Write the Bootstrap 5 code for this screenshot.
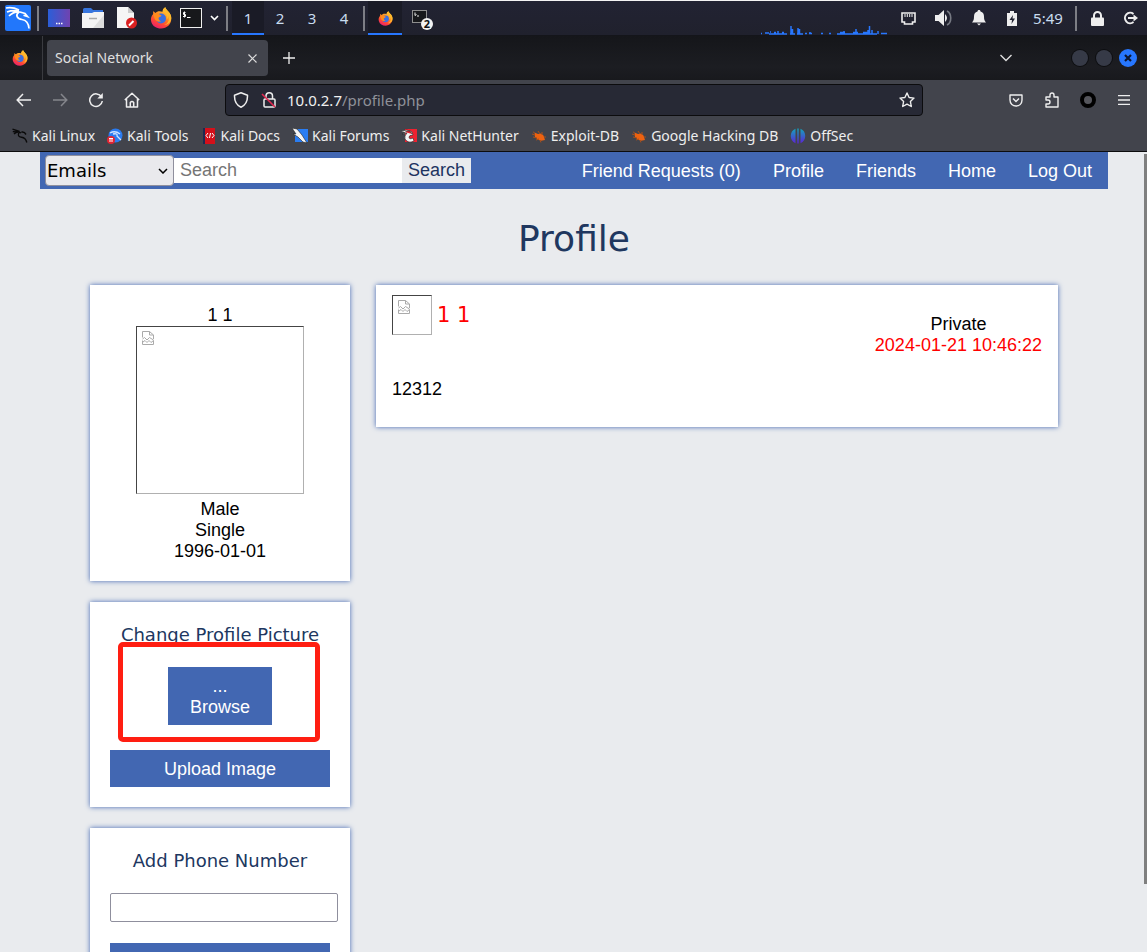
<!DOCTYPE html>
<html lang="en">
<head>
<meta charset="utf-8">
<meta name="viewport" content="width=device-width, initial-scale=1">
<title>Social Network</title>
<link href="https://cdn.jsdelivr.net/npm/bootstrap@5.3.0/dist/css/bootstrap.min.css" rel="stylesheet">
<style>
html, body { height: 100%; }
body { font: 15px/20px "Noto Sans", sans-serif; background: #e9ebee; color: #eee; overflow: hidden; }
svg { display: block; flex: none; }
a { color: inherit; text-decoration: none; }
.plain { background: none; border: 0; padding: 0; color: inherit; display: flex; align-items: center; justify-content: center; flex: none; }
/* desktop panel */
.panel { height: 36px; flex: none; background: linear-gradient(#222333, #20212d); border-top: 1px solid #f4f4f4; border-bottom: 1px solid #14151a; }
.panel .plain { height: 34px; }
.w16 { width: 16px; } .w26 { width: 26px; } .w30 { width: 30px; } .w32 { width: 32px; } .w34 { width: 34px; }
.w36 { width: 36px; } .w38 { width: 38px; } .w40 { width: 40px; } .w42 { width: 42px; } .w46 { width: 46px; }
.divider { width: 10px; display: flex; justify-content: center; flex: none; }
.divider::before { content: ""; width: 2px; height: 25px; background: #7d7e85; }
.divider.slim { width: 4px; } .divider.mid { width: 8px; }
.active-task { background: #1a1b26; box-shadow: inset 0 -2px #2777ff; }
.space { color: #c9dcef; }
/* browser */
.tabstrip { height: 44px; flex: none; background: linear-gradient(#15161a, #1c1d22 70%, #18191d); padding-right: 7px; }
.tabstrip .pin { border-right: 1px solid #3a3b40; height: 44px; width: 43px; padding-right: 2px; }
.tab { width: 221px; height: 36px; background: #42444c; border-radius: 4px; color: #e0e0e0; padding: 0 8px; margin-left: 4px; font-size: 14px; }
.all-tabs { margin-right: 41px; }
.round { width: 16px; height: 16px; border-radius: 50%; background: #363a47; margin: 0 4px; box-shadow: 0 0 0 1px #0d0e11; }
.close-win { background: #2777ff; box-shadow: 0 0 0 1px #2777ff; }
.toolbar { height: 40px; flex: none; background: #42444c; padding: 0 5px 0 6px; gap: 75px; }
.urlbar { height: 32px; background: #272935; border: 1px solid #0c0c0e; border-radius: 4px; padding: 0 7px; }
.urlbar .addr { color: #8f9199; } .urlbar b { color: #f0f0f0; font-weight: 400; }
.bookmarks { height: 32px; flex: none; background: #42444c; border-bottom: 1px solid #0c0c0d; padding: 0 12px; gap: 12px; font-size: 14px; }
.bookmarks a { display: flex; align-items: center; gap: 4px; white-space: nowrap; }
/* site */
.viewport { flex: 1 1 0; background: #e9ebee; color: #000; font: 18px/21px "Liberation Sans", sans-serif; min-height: 0; overflow: hidden; }
.thumb { width: 3px; height: 730px; background: #7f7f7f; margin-top: 2px; }
.site { padding: 0 36px 0 40px; min-width: 0; }
.topbar { background: #4267b2; height: 37px; padding: 0 0 0 5px; color: #fff; }
.topbar .links a { padding: 2px 16px 0; }
.kind { width: 129px; height: 31px; flex: none; border: 1px solid #8f8f9d; border-radius: 4px; background: #e9e9ed url("data:image/svg+xml,%3Csvg xmlns='http://www.w3.org/2000/svg' width='10' height='6'%3E%3Cpath d='M1 1l4 4 4-4' fill='none' stroke='%23000' stroke-width='1.5'/%3E%3C/svg%3E") no-repeat right 5px center; appearance: none; font: 18px "DejaVu Sans", sans-serif; padding: 0 1px; color: #000; }
.query { width: 228px; height: 25px; border: 0; padding: 0 6px; font: inherit; border-radius: 0; }
.query::placeholder { color: #757575; opacity: 1; }
.go { height: 25px; border: 0; background: #e9ebee; color: #1d3461; padding: 0 6px; font: inherit; }
h1, h2 { font-family: "DejaVu Sans", sans-serif; font-weight: 400; color: #20375f; text-align: center; margin: 0; }
h1 { font-size: 36px; line-height: 92px; padding-top: 4px; } h2 { font-size: 18px; line-height: 25px; }
.columns { padding: 0 50px; gap: 26px; }
.side { width: 260px; gap: 21px; flex: none; }
.box { background: #fff; box-shadow: 0 0 5px #4267b2; padding: 20px; position: relative; }
.broken { border: 1px solid #b0b0b0; border-top-color: #444; border-left-color: #444; padding: 4px 5px; }
.big { width: 168px; height: 168px; margin: 0 auto 5px; } .tiny { width: 40px; height: 40px; }
.about { padding-bottom: 19px; }
.act { background: #4267b2; color: #fff; border: 0; border-radius: 0; padding: 9px 8px 7px; min-height: 37px; font: inherit; line-height: 21px; display: block; }
.browse { width: 104px; margin: 20px auto 25px; text-align: center; cursor: pointer; }
.mark-box { position: absolute; left: 28px; top: 40px; width: 202px; height: 100px; border: 5px solid #ff1e12; border-radius: 5px; pointer-events: none; }
.phone { width: 228px; height: 29px; border: 1px solid #8f8f9d; border-radius: 2px; margin: 20px 0 21px; display: block; }
.post { padding: 10px 16px 27px; }
.author { font: 21px/40px "DejaVu Sans", sans-serif; color: #f00; margin-left: 5px; }
.stamp { padding-top: 19px; } .stamp time { color: #f00; }
.message { margin: 23px 0 0; }
</style>
</head>
<body class="d-flex flex-column">
<svg width="0" height="0" class="position-absolute" aria-hidden="true">
  <defs>
    <linearGradient id="fxg" x1=".8" y1="0" x2=".3" y2="1"><stop offset="0" stop-color="#ffe14a"/><stop offset=".45" stop-color="#ff8a1f"/><stop offset=".75" stop-color="#ff4438"/><stop offset="1" stop-color="#e8206e"/></linearGradient>
    <linearGradient id="desk" x1="0" x2="1"><stop offset="0" stop-color="#2b5ed8"/><stop offset="1" stop-color="#7043b0"/></linearGradient>
    <linearGradient id="off" x1="0" x2="0" y1="0" y2="1"><stop offset="0" stop-color="#12a5bd"/><stop offset="1" stop-color="#5c22d6"/></linearGradient>
    <symbol id="fox" viewBox="0 0 22 22"><path fill="url(#fxg)" d="M3.400 4C3 5 3 6 3.200 7 1 9 .5 12 1.300 15c1.300 4.200 5 6.500 9.700 6.500 6 0 10.300-4.300 10.300-10 0-3-1.300-5.600-3-7C17.500 3 15.500 2 15.300.3c-2 1.200-2.800 2.700-2.800 4.400-3-1-5.600-.5-7 1.300C4.500 5.400 3.800 4.800 3.400 4z"/><circle cx="11" cy="11.500" r="5" fill="#3b6fe0"/><path fill="#ff8b1d" d="M3.200 7c2-1.500 4.500-1.200 6 .3l2.300 1.200c0 1.300-2.500 1.500-3 2.500 0 1.500 1 2.800 2.700 3.300-2.500 1-6-.1-6.700-3z"/><path fill="#ffb92c" d="M13 4.500c3 1.500 4.300 4 3.800 7.500 1.400-.5 1.700-2 1.600-3.500C20 13 18 17 14 18c6-.3 8-5 7-9-.5-2-2-4-3.500-5.300-.8-1-1.800-2-2.200-3.400-2 1.200-2.500 2.600-2.300 4.200z"/></symbol>
    <symbol id="dragon" viewBox="0 0 16 16"><path d="M.5 1.200 7.500 3.500M.8 3.600 7 4M2 6C4 4 7 3.800 9 5M9.500 3.800l3 .7 1.500 2M7 4.500C5.500 7 6.500 9 9.500 9.300c3 .3 4.500 1.700 5.300 5.200" fill="none" stroke="currentColor" stroke-width="1.400"/></symbol>
    <symbol id="bug" viewBox="0 0 16 16"><path d="M3.500 4.500 7 6l3-.5 2.500 2L14 12l-4 .8-3-1.300-3-2.500z" fill="#ee6210"/><path d="m1 6 3 1M2 9l4 1M5 12l3-1M7 3l2 3M11 4l0 3M9 12l1 2.500M13 9l2 0M3.500 4.500 2 4" stroke="#a8501c" stroke-width="1"/></symbol>
    <symbol id="broken" viewBox="0 0 12 14"><path d="M.5 6.500v-6h7l4 3.500v4M7.500.5v3.500h4M.5 9.500v4h11v-4M.5 8l2-1.500L5 9l2.500-2.500L11.500 9M1 11l2-1.500L5 11.500l2-2 2 2 2.500-2" fill="none" stroke="#aaa"/></symbol>
  </defs>
</svg>

<header class="panel d-flex">
  <button class="plain w36" aria-label="Applications"><svg width="26" height="26" viewBox="0 0 26 26"><rect width="26" height="26" rx="2" fill="#2277fb"/><path d="M1 3c5-1 9 0 13 2M2 7c4-1.500 8-1.500 12-1M4 11c3-3 7-4.500 11-4M15 7l5 1.500 2.500 3-4-1.200M14 7c-4 3-2 7 3 7.500 4 .5 6.500 3 7 9" fill="none" stroke="#fff" stroke-width="1.700"/></svg></button>
  <span class="divider slim align-items-center"></span>
  <button class="plain w38" aria-label="Show desktop"><svg width="22" height="18" viewBox="0 0 22 18"><rect width="22" height="18" fill="url(#desk)"/><path d="M8 14.500h1.500m1 0h1.500m1 0h1.500" stroke="#fff" stroke-width="1.500"/></svg></button>
  <button class="plain w30" aria-label="Files"><svg width="22" height="20" viewBox="0 0 22 20"><path d="M1 6V1.500Q1 0 2.500 0H9l2 2h10v4z" fill="#3775dd"/><path d="M0 5h10l2-1h10v16H0z" fill="#f3f3f3"/><path d="M22 7v13H11z" fill="#ddd"/><path d="M7 10.500h8" stroke="#aaa" stroke-width="1.500"/></svg></button>
  <button class="plain w38" aria-label="Text editor"><svg width="20" height="22" viewBox="0 0 20 22"><path d="M0 0h11l6 6v15H0z" fill="#f5f5f5"/><path d="M11 0v6h6z" fill="#ccc"/><circle cx="14.500" cy="16" r="5.500" fill="#da2020"/><path d="m12 18.500 4.500-4.500" stroke="#fff" stroke-width="2"/></svg></button>
  <button class="plain w30" aria-label="Firefox"><svg width="22" height="22"><use href="#fox"/></svg></button>
  <button class="plain w30" aria-label="Terminal"><svg width="22" height="20" viewBox="0 0 22 20"><rect x=".5" y=".5" width="21" height="19" fill="#17181b" stroke="#f0f0f0"/><path d="M5.500 4.500H3.500v2h2V8.500H3M4.500 3.500V9.500M7 9.500h3.500" fill="none" stroke="#fff"/></svg></button>
  <button class="plain w16" aria-label="More terminals"><svg width="9" height="6" viewBox="0 0 9 6"><path d="m1 1 3.500 3.500L8 1" fill="none" stroke="#fff" stroke-width="1.600"/></svg></button>
  <span class="divider align-items-center"></span>
  <button class="plain space w32 active-task">1</button>
  <button class="plain space w32">2</button>
  <button class="plain space w32">3</button>
  <button class="plain space w32">4</button>
  <span class="divider mid align-items-center"></span>
  <button class="plain w34 active-task" aria-label="Firefox window"><svg width="15" height="15"><use href="#fox"/></svg></button>
  <button class="plain w38" aria-label="Terminal windows"><svg width="24" height="24" viewBox="0 0 24 24"><rect x="3.500" y="4.500" width="14" height="12" fill="#17181b" stroke="#8e8e8e"/><path d="M6 6.500v3l1.500-1M8 10h2" fill="none" stroke="#eee"/><circle cx="18" cy="18" r="6" fill="#f2f2f2"/><text x="18" y="22" font-size="11" font-weight="700" text-anchor="middle" fill="#111">2</text></svg></button>
  <div class="flex-grow-1 d-flex justify-content-end align-items-end"><svg width="127" height="11" viewBox="0 0 127 11"><path d="M1 9.500h1M5 9h4M9 10h18M10 8h1M14 8.500h2M18 7v3M22 8.500h2M31 2v8M32.500 5v5M30 10h5M38 4v6M39.500 5v5M37 10h6M45 9.500h2M49 9.500h3M50 8v2M61 9.500h2M69 9.500h2M77 10h40M80 8.500h5M84 7v3M93 8.500h5M96 5v5M103 8.500h7M108 6v4M109.500 2v8M112 6v4M118 7v3M121 9.500h6" stroke="#2777ff" stroke-width="1.500"/></svg></div>
  <button class="plain w42" aria-label="Network"><svg width="15" height="13" viewBox="0 0 15 13"><path d="M1 1h13v9h-2.500v2h-8v-2H1z" fill="none" stroke="#eee" stroke-width="1.600"/><path d="M4 2v3m2.300-3v3m2.400-3v3M11 2v3" stroke="#eee"/></svg></button>
  <button class="plain w30" aria-label="Volume"><svg width="18" height="16" viewBox="0 0 18 16"><path d="M0 5h3.500L9 0v16l-5.500-5H0z" fill="#eee"/><path d="M10 4q4 4 0 8z" fill="#eee"/><path d="M12 1c5 2.500 5 11.500 0 14" fill="none" stroke="#777a83" stroke-width="1.600"/></svg></button>
  <button class="plain w40" aria-label="Notifications"><svg width="14" height="16" viewBox="0 0 14 16"><path d="M7 0c1 0 1.500.6 1.500 1.500C11 2 12 4 12 6.500c0 3 .5 4.500 2 6H0c1.500-1.500 2-3 2-6C2 4 3 2 5.500 1.500 5.500.6 6 0 7 0zM5 13.500h4L7 15.500z" fill="#eee"/></svg></button>
  <button class="plain w26" aria-label="Battery"><svg width="10" height="15" viewBox="0 0 10 15"><path d="M0 2h3V0h4v2h3v13H0z" fill="#eee"/><path d="M6 4 2.500 9H5l-.5 4L8 7.500H5.500z" fill="#222331"/></svg></button>
  <button class="plain space w46">5:49</button>
  <span class="divider align-items-center"></span>
  <button class="plain w32" aria-label="Lock screen"><svg width="13" height="15" viewBox="0 0 13 15"><path d="M3 7V4.500a3.500 3.500 0 0 1 7 0V7" fill="none" stroke="#eee" stroke-width="2"/><rect y="6.500" width="13" height="8.500" rx="1" fill="#eee"/></svg></button>
  <button class="plain w34" aria-label="Log out"><svg width="15" height="14" viewBox="0 0 15 14"><path d="M10.500 3A5.200 5.200 0 1 0 10.500 11M5 7h7" fill="none" stroke="#eee" stroke-width="2"/><path d="m10.500 3.500 4.500 3.500-4.500 3.500z" fill="#eee"/></svg></button>
</header>

<div class="tabstrip d-flex align-items-center">
  <span class="pin d-flex align-items-center justify-content-center"><svg width="16" height="16"><use href="#fox"/></svg></span>
  <div class="tab d-flex align-items-center justify-content-between"><span>Social Network</span><button class="plain w16" aria-label="Close tab"><svg width="9" height="9" viewBox="0 0 9 9"><path d="m.5.5 8 8m0-8-8 8" stroke="#ddd" stroke-width="1.200"/></svg></button></div>
  <button class="plain w42" aria-label="New tab"><svg width="12" height="12" viewBox="0 0 12 12"><path d="M6 0v12M0 6h12" stroke="#eee" stroke-width="1.300"/></svg></button>
  <button class="plain w42 ms-auto all-tabs" aria-label="List all tabs"><svg width="12" height="8" viewBox="0 0 12 8"><path d="m.5 1 5.500 5.500L11.500 1" fill="none" stroke="#ddd" stroke-width="1.400"/></svg></button>
  <button class="plain round" aria-label="Minimize"></button>
  <button class="plain round" aria-label="Maximize"></button>
  <button class="plain round close-win" aria-label="Close"><svg width="8" height="8" viewBox="0 0 8 8"><path d="m1 1 6 6m0-6L1 7" stroke="#0d1730" stroke-width="2.200"/></svg></button>
</div>

<div class="toolbar d-flex align-items-center">
  <div class="d-flex">
    <button class="plain w36" aria-label="Back"><svg width="16" height="14" viewBox="0 0 16 14"><path d="M15 7H1.500M7 1 1.200 7 7 13" fill="none" stroke="#eee" stroke-width="1.500"/></svg></button>
    <button class="plain w36" aria-label="Forward"><svg width="16" height="14" viewBox="0 0 16 14"><path d="M1 7h13.500M9 1l5.800 6L9 13" fill="none" stroke="#85868c" stroke-width="1.500"/></svg></button>
    <button class="plain w36" aria-label="Reload"><svg width="16" height="16" viewBox="0 0 16 16"><path d="M13.500 5A6.300 6.300 0 1 0 14.300 9" fill="none" stroke="#eee" stroke-width="1.500"/><path d="M14.800 1v5.500H9.300z" fill="#eee"/></svg></button>
    <button class="plain w36" aria-label="Home"><svg width="16" height="16" viewBox="0 0 16 16"><path d="M.8 8 8 1.200 15.200 8M2.500 7v8h11V7M6.300 15v-4.500q1.700-2 3.400 0V15" fill="none" stroke="#eee" stroke-width="1.500" stroke-linejoin="round"/></svg></button>
  </div>
  <div class="urlbar d-flex align-items-center flex-grow-1">
    <svg width="16" height="16" viewBox="0 0 16 16"><path d="M8 .8 14.500 3.300C14.700 9 13 13 8 15.200 3 13 1.300 9 1.500 3.300z" fill="none" stroke="#eee" stroke-width="1.500" stroke-linejoin="round"/></svg>
    <svg class="ms-2 me-1 ps-1" width="22" height="16" viewBox="0 0 18 16"><path d="M5 7V4a3.200 3.200 0 0 1 6.500 0v3" fill="none" stroke="#eee" stroke-width="1.500"/><rect x="3" y="7" width="11" height="8" rx="1" fill="none" stroke="#eee" stroke-width="1.500"/><path d="m1 2 13 13" stroke="#e22850" stroke-width="1.600"/></svg>
    <span class="addr flex-grow-1 ms-1"><b>10.0.2.7</b>/profile.php</span>
    <button class="plain" aria-label="Bookmark this page"><svg width="16" height="16" viewBox="0 0 16 16"><path d="m8 1 2.100 4.500 4.900.6-3.600 3.400.9 5L8 12.100 3.700 14.500l.9-5L1 6.100l4.900-.6z" fill="none" stroke="#eee" stroke-width="1.400" stroke-linejoin="round"/></svg></button>
  </div>
  <div class="d-flex">
    <button class="plain w36" aria-label="Save to Pocket"><svg width="14" height="13" viewBox="0 0 14 13"><path d="M1 1h12v5c0 8-12 8-12 0z" fill="none" stroke="#eee" stroke-width="1.400" stroke-linejoin="round"/><path d="m4 4.500 3 3 3-3" fill="none" stroke="#eee" stroke-width="1.500"/></svg></button>
    <button class="plain w36" aria-label="Extensions"><svg width="14" height="16" viewBox="0 0 14 16"><path d="M1 8V5h4V3a2 2 0 0 1 4 0v2h4v10H1v-3h2a2 2 0 0 0 0-4z" fill="none" stroke="#eee" stroke-width="1.400" stroke-linejoin="round"/></svg></button>
    <button class="plain w36" aria-label="Account"><svg width="16" height="16" viewBox="0 0 16 16"><circle cx="8" cy="8" r="6" fill="#55565c" stroke="#000" stroke-width="4"/></svg></button>
    <button class="plain w36" aria-label="Menu"><svg width="12" height="10" viewBox="0 0 12 10"><path d="M0 .7h12M0 5h12M0 9.300h12" stroke="#eee" stroke-width="1.300"/></svg></button>
  </div>
</div>

<nav class="bookmarks d-flex align-items-center">
  <a href="#"><svg width="16" height="16" color="#0a0a0a"><use href="#dragon"/></svg>Kali Linux</a>
  <a href="#"><svg width="16" height="16" viewBox="0 0 16 16"><circle cx="8.500" cy="7.500" r="7" fill="#2a7bf0"/><path d="M3 5q5-3 10 1M6 6q5-1 4 2l4 4" fill="none" stroke="#cfe2ff" stroke-width="1.300"/><circle cx="4" cy="12" r="4" fill="#e22432"/><path d="M2 10.500h4M3 11v3m2-3v3" stroke="#fff"/></svg>Kali Tools</a>
  <a href="#"><svg width="16" height="16" viewBox="0 0 16 16"><path d="M2 0h12v16H2z" fill="#d4101a"/><path d="M2 0h2v16H2z" fill="#1e2a52"/><path d="m7 5-2 2.500L7 10m4-5 2 2.500L11 10M9.500 5l-1 5" fill="none" stroke="#fff"/></svg>Kali Docs</a>
  <a href="#"><svg width="16" height="16" viewBox="0 0 16 16"><path d="M3 1h13v13H3z" fill="#2a7df2"/><path d="M0 0l5 1 5 6 5 8-4-1-5-5-5-3 3 0z" fill="#f5f5f5" stroke="#222" stroke-width=".6"/></svg>Kali Forums</a>
  <a href="#"><svg width="16" height="16" viewBox="0 0 16 16"><path d="M4 1h12v13H4z" fill="#ee2230"/><path d="M0 3 6 2q4 1 5 4M1 6l5-1q-3 3-2 6 3 5 9 2l-1-3q-4 2-4-1 0-2 4-2l-1-3q-2-2-5-1z" fill="#f5f5f5" stroke="#222" stroke-width=".6"/></svg>Kali NetHunter</a>
  <a href="#"><svg width="16" height="16"><use href="#bug"/></svg>Exploit-DB</a>
  <a href="#"><svg width="16" height="16"><use href="#bug"/></svg>Google Hacking DB</a>
  <a href="#"><svg width="16" height="16" viewBox="0 0 16 16"><path d="M5.500.8v14.400C-.8 13-.8 3 5.500.8zM10.500.8v14.400C16.800 13 16.800 3 10.500.8zM7.300.5h1.400v15H7.300z" fill="url(#off)"/></svg>OffSec</a>
</nav>

<div class="viewport d-flex">
  <div class="site flex-grow-1">
    <nav class="topbar d-flex align-items-center">
      <form class="d-flex align-items-center">
        <select class="kind" aria-label="Search in"><option>Emails</option><option>Names</option><option>Hometowns</option><option>Posts</option></select>
        <input class="query" type="text" placeholder="Search" aria-label="Search">
        <button class="go" type="button">Search</button>
      </form>
      <div class="links d-flex ms-auto text-nowrap">
        <a href="#">Friend Requests (0)</a><a href="#">Profile</a><a href="#">Friends</a><a href="#">Home</a><a href="#">Log Out</a>
      </div>
    </nav>
    <h1>Profile</h1>
    <main class="columns d-flex align-items-start">
      <div class="side d-flex flex-column">
        <section class="box about text-center">
          <div>1 1</div>
          <div class="broken big"><svg width="12" height="14"><use href="#broken"/></svg></div>
          <div>Male</div><div>Single</div><div>1996-01-01</div>
        </section>
        <section class="box">
          <h2>Change Profile Picture</h2>
          <button type="button" class="act browse">...<br>Browse</button>
          <button type="button" class="act w-100">Upload Image</button>
          <div class="mark-box"></div>
        </section>
        <section class="box">
          <h2><label for="phone">Add Phone Number</label></h2>
          <input class="phone" id="phone" type="text">
          <button type="button" class="act w-100" aria-label="Add phone number"></button>
        </section>
      </div>
      <article class="box post flex-grow-1">
        <div class="d-flex align-items-start">
          <div class="broken tiny"><svg width="12" height="14"><use href="#broken"/></svg></div>
          <a href="#" class="author">1 1</a>
          <div class="stamp text-center ms-auto"><div>Private</div><time>2024-01-21 10:46:22</time></div>
        </div>
        <p class="message">12312</p>
      </article>
    </main>
  </div>
  <div class="thumb flex-shrink-0"></div>
</div>
<script src="https://cdn.jsdelivr.net/npm/bootstrap@5.3.0/dist/js/bootstrap.bundle.min.js"></script>
</body>
</html>
